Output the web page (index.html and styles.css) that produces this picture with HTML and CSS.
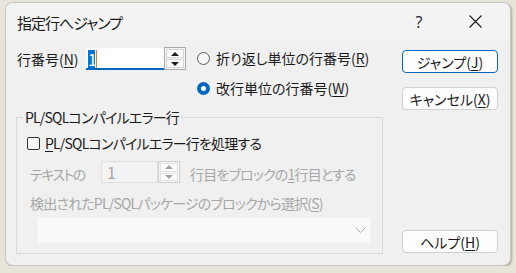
FILE: index.html
```html
<!DOCTYPE html>
<html lang="ja">
<head>
    <meta charset="UTF-8">
    <meta name="viewport" content="width=device-width, initial-scale=1.0">
    <title>指定行へジャンプ</title>
    <link rel="stylesheet" href="styles.css">
</head>
<body>
    <div class="window">
        <div class="titlebar">
            <span class="title">指定行へジャンプ</span>
            <span class="tb-btn">?</span>
            <span class="tb-btn">
                <svg width="13" height="13" viewBox="0 0 13 13">
                    <path d="M0.5 0.5 L12.5 12.5 M12.5 0.5 L0.5 12.5" stroke="#1a1a1a" stroke-width="1.1" fill="none"/>
                </svg>
            </span>
        </div>

        <div class="content">
            <div class="left">
                <div class="line-row">
                    <span class="line-label">行番号(<u>N</u>)</span>
                    <div class="spin">
                        <div class="spin-field active"><span class="sel">1</span><span class="caret"></span></div>
                        <div class="spin-btns">
                            <span class="arrow up"></span>
                            <span class="arrow down"></span>
                        </div>
                    </div>
                    <div class="radios">
                        <div class="radio"><span class="dot"></span><span>折り返し単位の行番号(<u>R</u>)</span></div>
                        <div class="radio checked"><span class="dot"></span><span>改行単位の行番号(<u>W</u>)</span></div>
                    </div>
                </div>

                <fieldset class="group">
                    <legend class="tight">PL/SQLコンパイルエラー行</legend>
                    <div class="check-row"><span class="box"></span><span class="tight"><u>P</u>L/SQLコンパイルエラー行を処理する</span></div>
                    <div class="block-row disabled">
                        <span class="block-label">テキストの</span>
                        <div class="spin small">
                            <div class="spin-field">1</div>
                            <div class="spin-btns">
                                <span class="arrow up"></span>
                                <span class="arrow down"></span>
                            </div>
                        </div>
                        <span class="block-after tight">行目をブロックの<u>1</u>行目とする</span>
                    </div>
                    <div class="pick-label disabled tight">検出されたPL/SQLパッケージのブロックから選択(<u>S</u>)</div>
                    <div class="combo">
                        <svg width="11" height="6" viewBox="0 0 11 6">
                            <path d="M0.5 0.5 L5.5 5.5 L10.5 0.5" stroke="#b4b4b4" stroke-width="1" fill="none"/>
                        </svg>
                    </div>
                </fieldset>
            </div>

            <div class="buttons">
                <button class="btn default">ジャンプ(<u>J</u>)</button>
                <button class="btn">キャンセル(<u>X</u>)</button>
                <button class="btn help">ヘルプ(<u>H</u>)</button>
            </div>
        </div>
    </div>
</body>
</html>
```

FILE: styles.css
```css
body {
    margin: 0;
    background-color: #e8e4da;
    font-family: "Noto Sans CJK JP", sans-serif;
    font-feature-settings: "palt";
    font-size: 14px;
    color: #1a1a1a;
}
u {
    text-decoration-thickness: 1px;
    text-underline-offset: 2px;
}
.tight {
    letter-spacing: -0.8px;
}
.window {
    margin: 2px 0 0 5px;
    width: 506px;
    height: 264px;
    box-sizing: border-box;
    border: 1px solid #c9c7c2;
    border-radius: 8px;
    background-color: #f0f0f0;
    box-shadow: 1px 1px 2px rgba(0, 0, 0, 0.25);
    overflow: hidden;
    display: flex;
    flex-direction: column;
}
.titlebar {
    height: 37px;
    background-color: #f3f3f3;
    display: flex;
    align-items: center;
    padding: 0 7px 0 11px;
    flex-shrink: 0;
}
.title {
    flex: 1;
    font-size: 15px;
    letter-spacing: -1px;
    line-height: 20px;
    margin-top: 2px;
}
.tb-btn {
    width: 56px;
    height: 37px;
    display: flex;
    align-items: center;
    justify-content: center;
    font-size: 16px;
    font-family: "Open Sans", sans-serif;
}
.content {
    flex: 1;
    display: flex;
    gap: 19px;
    padding: 7px 12px 11px 10px;
    line-height: 18px;
}
.left {
    width: 367px;
    display: flex;
    flex-direction: column;
}
.line-row {
    display: flex;
    align-items: flex-start;
}
.line-label {
    width: 69px;
    margin: 3px 0 0 1px;
}
.spin {
    display: flex;
    align-items: flex-start;
}
.spin-field {
    width: 78px;
    height: 22px;
    margin-top: 1px;
    box-sizing: border-box;
    background-color: #ffffff;
    display: flex;
    align-items: center;
    padding-left: 2px;
    font-size: 16px;
}
.spin-field.active {
    border-bottom: 2px solid #0067c0;
    padding-top: 2px;
}
.sel {
    background-color: #0078d4;
    color: #ffffff;
    width: 7px;
    height: 18px;
    line-height: 18px;
    text-align: center;
}
.caret {
    width: 1px;
    height: 18px;
    background-color: #e87a1a;
    margin-left: 1px;
}
.spin-btns {
    width: 22px;
    height: 23px;
    box-sizing: border-box;
    border: 1px solid #a9a9a9;
    background-color: #f6f6f6;
    display: flex;
    flex-direction: column;
    padding: 1px;
    gap: 1px;
}
.arrow {
    flex: 1;
    border: 1px solid #d4d4d4;
    background-color: #fbfbfb;
    display: flex;
    align-items: center;
    justify-content: center;
}
.arrow::after {
    content: "";
    border-left: 4px solid transparent;
    border-right: 4px solid transparent;
}
.arrow.up::after {
    border-bottom: 4px solid #1a1a1a;
}
.arrow.down::after {
    border-top: 4px solid #1a1a1a;
}
.radios {
    margin: 2px 0 0 11px;
    display: flex;
    flex-direction: column;
    gap: 12px;
}
.radio {
    display: flex;
    align-items: center;
    gap: 6px;
}
.dot {
    width: 13px;
    height: 13px;
    box-sizing: border-box;
    border: 1px solid #5c5c5c;
    border-radius: 50%;
    background-color: #f7f7f7;
}
.radio.checked .dot {
    border: 4px solid #0067c0;
    background-color: #ffffff;
}
.group {
    margin: 11px 0 0;
    flex: 1;
    border: 1px solid #d9d9d9;
    padding: 0 10px 0 6px;
    min-width: 0;
}
.group legend {
    padding: 0 2px;
    line-height: 18px;
}
.check-row {
    margin: 8px 0 0 4px;
    display: flex;
    align-items: center;
    gap: 5px;
}
.box {
    width: 13px;
    height: 13px;
    box-sizing: border-box;
    border: 1px solid #333333;
    border-radius: 2px;
    background-color: #f7f7f7;
}
.disabled {
    color: #a6a6a6;
}
.block-row {
    margin: 9px 0 0 7px;
    display: flex;
    align-items: flex-start;
}
.block-label {
    width: 71px;
    margin-top: 4px;
    letter-spacing: -1.5px;
}
.spin.small .spin-field {
    width: 57px;
    margin-top: 0;
    background-color: #f3f3f3;
    border: 1px solid #e0e0e0;
    padding-left: 5px;
    color: #a6a6a6;
}
.spin.small .spin-btns {
    height: 22px;
    border-color: #cfcfcf;
}
.spin.small .arrow {
    border-color: #e2e2e2;
}
.spin.small .arrow.up::after {
    border-bottom-color: #a6a6a6;
}
.spin.small .arrow.down::after {
    border-top-color: #a6a6a6;
}
.block-after {
    margin: 4px 0 0 10px;
}
.pick-label {
    margin: 11px 0 0 7px;
}
.combo {
    margin: 5px 0 0 14px;
    width: 334px;
    height: 26px;
    box-sizing: border-box;
    background-color: #fafafa;
    border: 1px solid #f4f4f4;
    display: flex;
    align-items: center;
    justify-content: flex-end;
    padding-right: 4px;
}
.buttons {
    width: 96px;
    display: flex;
    flex-direction: column;
}
.btn {
    height: 23px;
    margin-top: 3px;
    box-sizing: border-box;
    border: 1px solid #d0d0d0;
    border-radius: 4px;
    background-color: #fdfdfd;
    font-family: inherit;
    font-feature-settings: "palt";
    font-size: 14px;
    line-height: 18px;
    color: #1a1a1a;
    padding: 0;
}
.btn.default {
    border-color: #0067c0;
}
.btn + .btn {
    margin-top: 14px;
}
.btn.help {
    margin-top: auto;
    margin-bottom: 1px;
}
```
